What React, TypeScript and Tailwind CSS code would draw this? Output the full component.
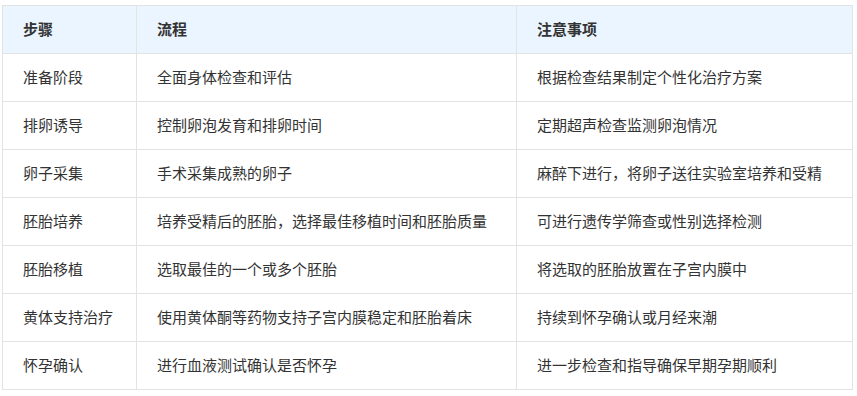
import React from "react";

const rows: [string, string, string][] = [
  ["准备阶段", "全面身体检查和评估", "根据检查结果制定个性化治疗方案"],
  ["排卵诱导", "控制卵泡发育和排卵时间", "定期超声检查监测卵泡情况"],
  ["卵子采集", "手术采集成熟的卵子", "麻醉下进行，将卵子送往实验室培养和受精"],
  ["胚胎培养", "培养受精后的胚胎，选择最佳移植时间和胚胎质量", "可进行遗传学筛查或性别选择检测"],
  ["胚胎移植", "选取最佳的一个或多个胚胎", "将选取的胚胎放置在子宫内膜中"],
  ["黄体支持治疗", "使用黄体酮等药物支持子宫内膜稳定和胚胎着床", "持续到怀孕确认或月经来潮"],
  ["怀孕确认", "进行血液测试确认是否怀孕", "进一步检查和指导确保早期孕期顺利"],
];

export default function App() {
  return (
    <div
      className="bg-white w-[857px] h-[396px] pt-[5px] pl-[2px]"
      style={{ fontFamily: '"Noto Sans CJK SC", "Noto Sans", sans-serif' }}
    >
      <table className="border-collapse text-[15px] text-[#333] w-[850px] table-fixed">
        <colgroup>
          <col className="w-[134px]" />
          <col className="w-[380px]" />
          <col className="w-[336px]" />
        </colgroup>
        <thead>
          <tr className="bg-[#eaf5ff] h-[48px]">
            <th className="border border-[#e3e3e3] text-left font-bold pl-[20px]">步骤</th>
            <th className="border border-[#e3e3e3] text-left font-bold pl-[20px]">流程</th>
            <th className="border border-[#e3e3e3] text-left font-bold pl-[20px]">注意事项</th>
          </tr>
        </thead>
        <tbody>
          {rows.map((r, i) => (
            <tr key={i} className="h-[48px]">
              {r.map((c, j) => (
                <td key={j} className="border border-[#e3e3e3] pl-[20px] whitespace-nowrap">
                  {c}
                </td>
              ))}
            </tr>
          ))}
        </tbody>
      </table>
    </div>
  );
}
